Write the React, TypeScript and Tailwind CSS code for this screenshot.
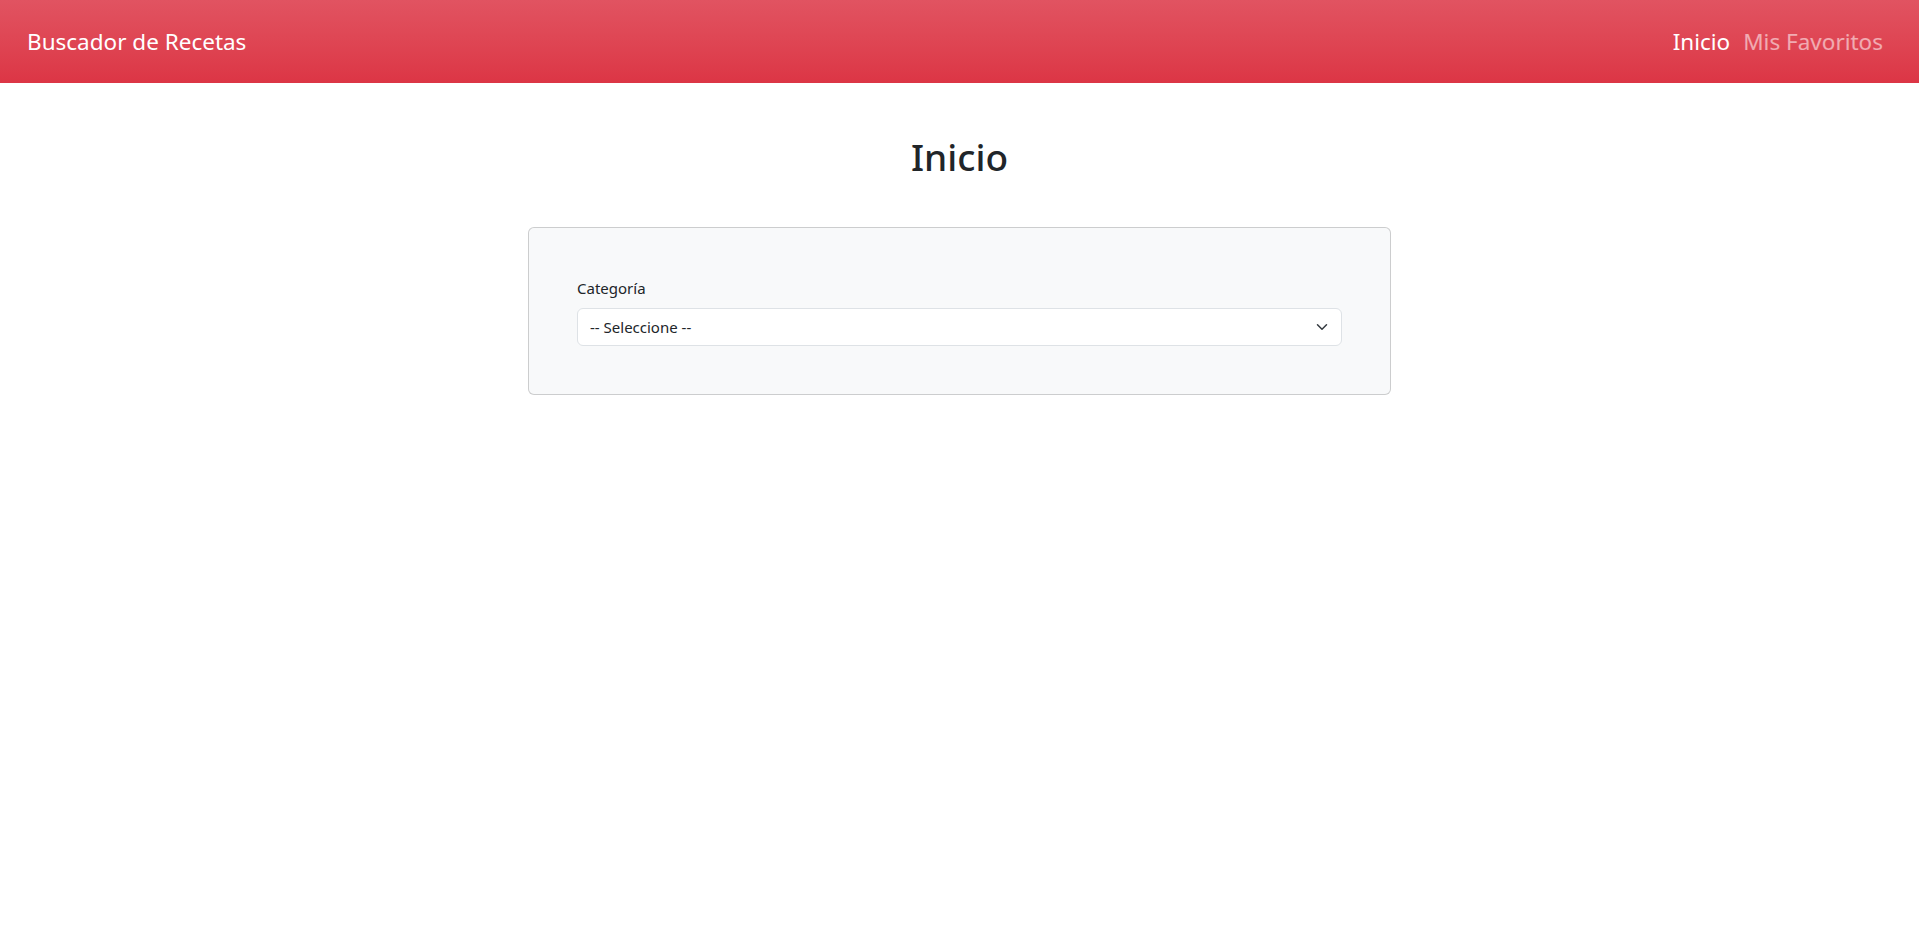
import { useState } from "react";

const font = { fontFamily: '"Noto Sans", "Open Sans", sans-serif' };

export default function App() {
  const [category, setCategory] = useState("");

  return (
    <div className="min-h-screen bg-white text-[#212529]" style={font}>
      <nav className="flex h-[83px] items-center justify-between bg-[#dc3545] bg-gradient-to-b from-[#e15361] to-[#dc3545] pl-[27px] pr-[36px]">
        <a href="#" className="text-[22.5px] text-white">
          Buscador de Recetas
        </a>
        <div className="flex items-center gap-[13px] text-[22.5px]">
          <a href="#" className="text-white">
            Inicio
          </a>
          <a href="#" className="text-white/55">
            Mis Favoritos
          </a>
        </div>
      </nav>

      <main className="flex flex-col items-center">
        <h1 className="mt-[52px] text-[37px] font-medium leading-[1.2]">Inicio</h1>

        <div className="mt-[48px] w-[863px] rounded-md border border-black/[0.175] bg-[#f8f9fa] p-12">
          <label htmlFor="categoria" className="mb-2 block text-[15px] leading-6">
            Categoría
          </label>
          <div className="relative">
            <select
              id="categoria"
              value={category}
              onChange={(e) => setCategory(e.target.value)}
              className="block h-[38px] w-full appearance-none rounded-md border border-[#dee2e6] bg-white pl-3 pr-9 text-[15px] text-[#212529] outline-none"
              style={font}
            >
              <option value="">-- Seleccione --</option>
              <option value="beef">Beef</option>
              <option value="chicken">Chicken</option>
              <option value="dessert">Dessert</option>
            </select>
            <svg
              className="pointer-events-none absolute right-[12px] top-1/2 -translate-y-1/2"
              width="16"
              height="12"
              viewBox="0 0 16 16"
              fill="none"
            >
              <path d="m2 5 6 6 6-6" stroke="#343a40" strokeWidth="2" strokeLinecap="round" strokeLinejoin="round" />
            </svg>
          </div>
        </div>
      </main>
    </div>
  );
}
